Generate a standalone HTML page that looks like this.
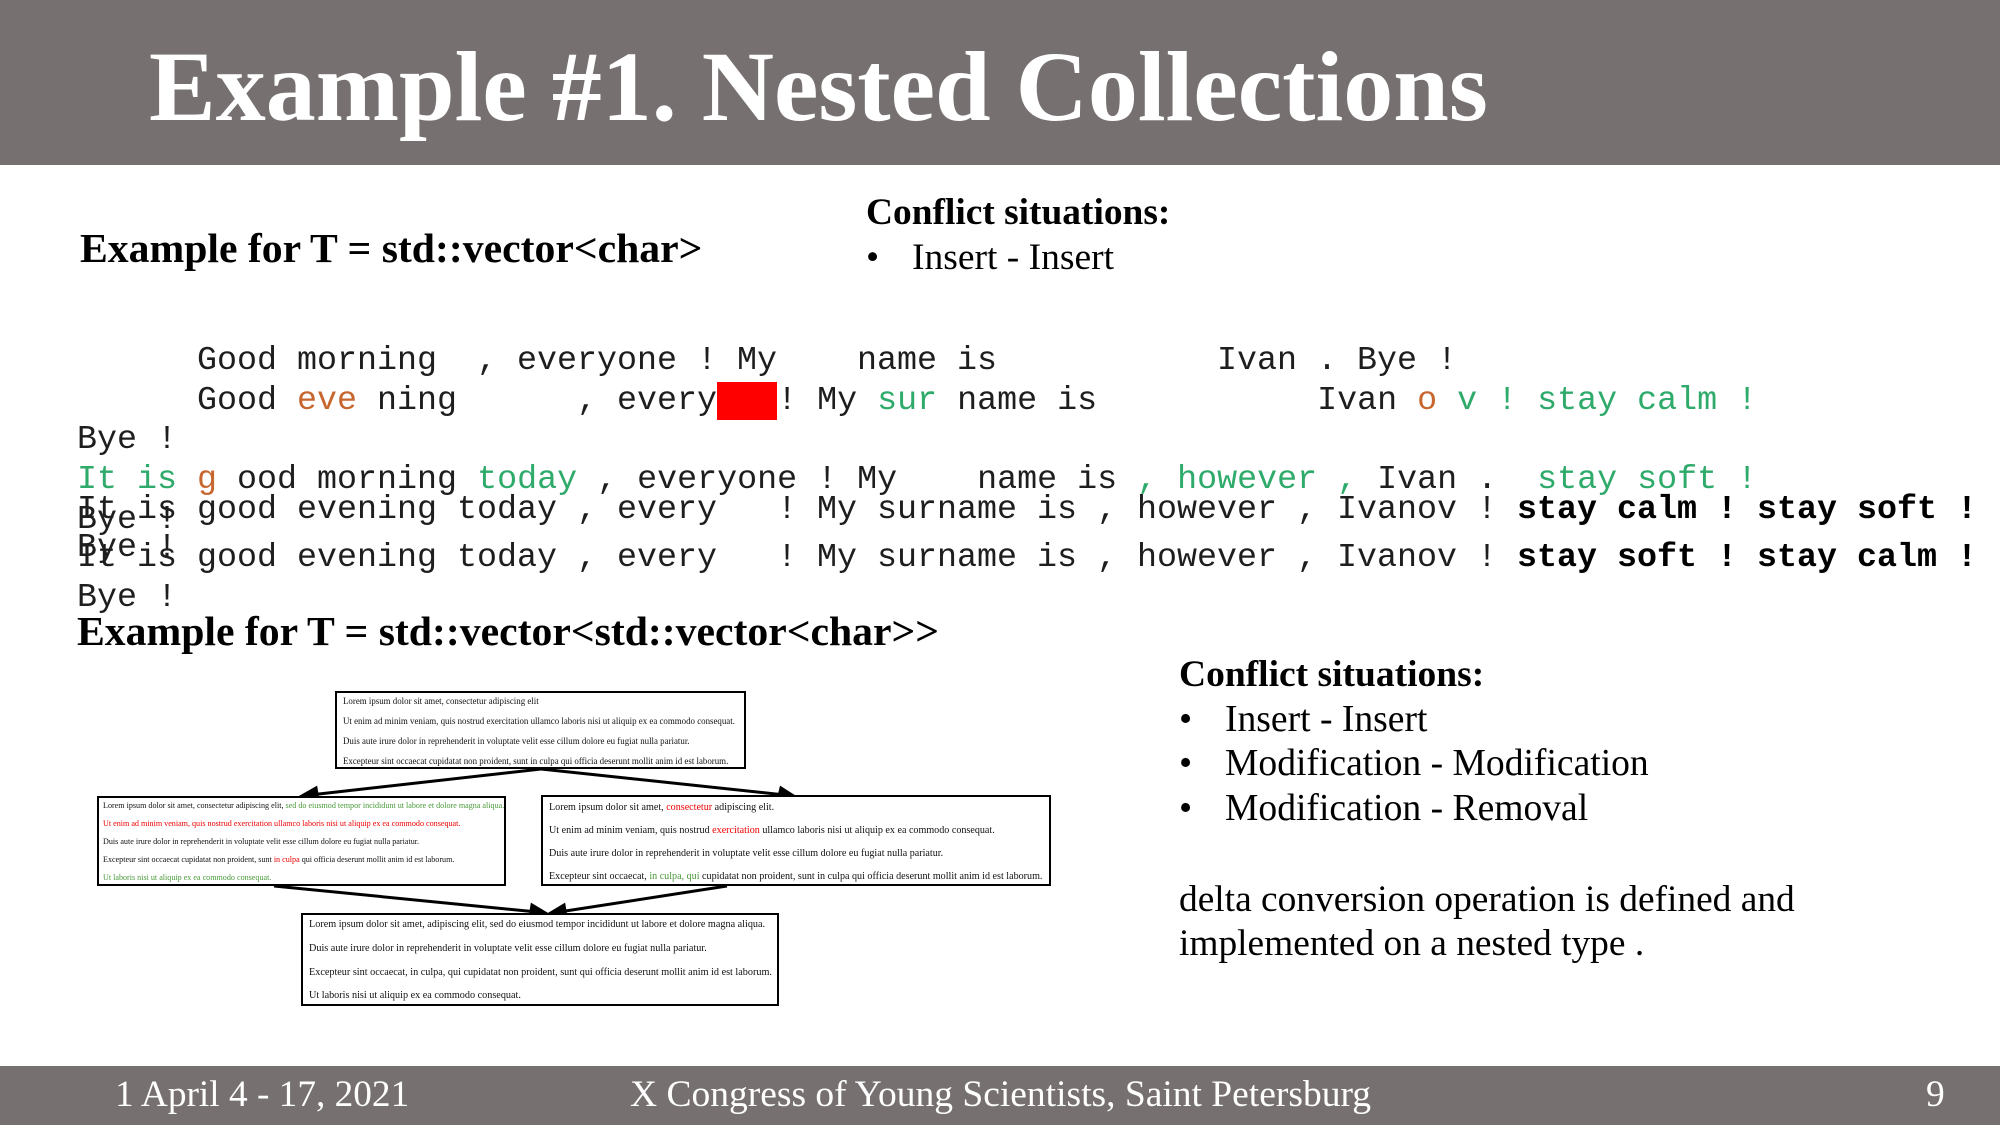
<!DOCTYPE html>
<html><head><meta charset="utf-8"><style>
*{margin:0;padding:0;box-sizing:border-box}
body{width:2000px;height:1125px;position:relative;background:#fff;overflow:hidden;font-family:"Liberation Serif",serif;color:#000}
.a{position:absolute;white-space:pre;line-height:1}
.hdr{position:absolute;left:0;top:0;width:2000px;height:165px;background:#767170}
.ftr{position:absolute;left:0;top:1066px;width:2000px;height:59px;background:#767170}
.m{position:absolute;left:77px;font-family:"Liberation Mono",monospace;font-size:33.33px;line-height:1;white-space:pre;color:#1e1e1e}
.g{color:#2eaa6a}.o{color:#c8662f}.b{font-weight:bold;color:#000}
.red{background:#f00}
.box{position:absolute;border:2px solid #000;background:#fff;font-family:"Liberation Serif",serif;color:#111}
.box div{position:absolute;white-space:nowrap;line-height:1}
.r{color:#e00}.gr{color:#4a9a3a}
</style></head><body>
<div class="hdr"></div>
<div class="a" style="left:149px;top:37px;font-size:100px;font-weight:bold;color:#fff">Example #1. Nested Collections</div>

<div class="a" style="left:80px;top:229px;font-size:41.7px;font-weight:bold">Example for T = std::vector&lt;char&gt;</div>
<div class="a" style="left:866px;top:194px;font-size:37.4px;font-weight:bold">Conflict situations:</div>
<div class="a" style="left:866px;top:239px;font-size:37.5px">•</div>
<div class="a" style="left:912px;top:239px;font-size:37.5px">Insert - Insert</div>

<div class="m" style="top:345px">      Good morning  , everyone ! My    name is           Ivan . Bye !</div>
<div class="m" style="top:385px">      Good <span class="o">eve</span> ning      , every<span class="red">   </span>! My <span class="g">sur</span> name is           Ivan <span class="o">o</span> <span class="g">v ! stay calm !</span></div>
<div class="m" style="top:424px">Bye !</div>
<div class="m" style="top:464px"><span class="g">It is</span> <span class="o">g</span> ood morning <span class="g">today</span> , everyone ! My    name is <span class="g">, however ,</span> Ivan .  <span class="g">stay soft !</span></div>
<div class="m" style="top:494px">It is good evening today , every   ! My surname is , however , Ivanov ! <span class="b">stay calm ! stay soft !</span></div>
<div class="m" style="top:504px">Bye !</div>
<div class="m" style="top:532px">Bye !</div>
<div class="m" style="top:542px">It is good evening today , every   ! My surname is , however , Ivanov ! <span class="b">stay soft ! stay calm !</span></div>
<div class="m" style="top:582px">Bye !</div>

<div class="a" style="left:77px;top:612px;font-size:41.7px;font-weight:bold">Example for T = std::vector&lt;std::vector&lt;char&gt;&gt;</div>

<div class="a" style="left:1179px;top:656px;font-size:37.5px;font-weight:bold">Conflict situations:</div>
<div class="a" style="left:1179px;top:701px;font-size:37.6px">•</div>
<div class="a" style="left:1225px;top:701px;font-size:37.6px">Insert - Insert</div>
<div class="a" style="left:1179px;top:745px;font-size:37.6px">•</div>
<div class="a" style="left:1225px;top:745px;font-size:37.6px">Modification - Modification</div>
<div class="a" style="left:1179px;top:790px;font-size:37.6px">•</div>
<div class="a" style="left:1225px;top:790px;font-size:37.6px">Modification - Removal</div>
<div class="a" style="left:1179px;top:881px;font-size:37.4px">delta conversion operation is defined and</div>
<div class="a" style="left:1179px;top:925px;font-size:37.4px">implemented on a nested type .</div>

<svg style="position:absolute;left:0;top:0" width="2000" height="1125">
<g stroke="#000" stroke-width="3" fill="#000">
<line x1="541" y1="769" x2="310" y2="795"/><polygon points="300,797 316,788 318,800"/>
<line x1="541" y1="769" x2="785" y2="795"/><polygon points="795,797 778,800 781,788"/>
<line x1="274" y1="886" x2="537" y2="912"/><polygon points="547,914 530,917 532,905"/>
<line x1="727" y1="886" x2="559" y2="912"/><polygon points="549,914 564,905 566,917"/>
</g></svg>

<div class="box" style="left:335px;top:691px;width:411px;height:78px;font-size:8.9px">
<div style="left:6px;top:4px">Lorem ipsum dolor sit amet, consectetur adipiscing elit</div>
<div style="left:6px;top:24px">Ut enim ad minim veniam, quis nostrud exercitation ullamco laboris nisi ut aliquip ex ea commodo consequat.</div>
<div style="left:6px;top:44px">Duis aute irure dolor in reprehenderit in voluptate velit esse cillum dolore eu fugiat nulla pariatur.</div>
<div style="left:6px;top:64px">Excepteur sint occaecat cupidatat non proident, sunt in culpa qui officia deserunt mollit anim id est laborum.</div>
</div>
<div class="box" style="left:97px;top:796px;width:409px;height:90px;font-size:8.1px">
<div style="left:4px;top:4px">Lorem ipsum dolor sit amet, consectetur adipiscing elit, <span class="gr">sed do eiusmod tempor incididunt ut labore et dolore magna aliqua.</span></div>
<div style="left:4px;top:22px" class="r">Ut enim ad minim veniam, quis nostrud exercitation ullamco laboris nisi ut aliquip ex ea commodo consequat.</div>
<div style="left:4px;top:40px">Duis aute irure dolor in reprehenderit in voluptate velit esse cillum dolore eu fugiat nulla pariatur.</div>
<div style="left:4px;top:58px">Excepteur sint occaecat cupidatat non proident, sunt <span class="r">in culpa</span> qui officia deserunt mollit anim id est laborum.</div>
<div style="left:4px;top:76px" class="gr">Ut laboris nisi ut aliquip ex ea commodo consequat.</div>
</div>
<div class="box" style="left:541px;top:795px;width:510px;height:91px;font-size:10.1px">
<div style="left:6px;top:6px">Lorem ipsum dolor sit amet, <span class="r">consectetur</span> adipiscing elit.</div>
<div style="left:6px;top:29px">Ut enim ad minim veniam, quis nostrud <span class="r">exercitation</span> ullamco laboris nisi ut aliquip ex ea commodo consequat.</div>
<div style="left:6px;top:52px">Duis aute irure dolor in reprehenderit in voluptate velit esse cillum dolore eu fugiat nulla pariatur.</div>
<div style="left:6px;top:75px">Excepteur sint occaecat, <span class="gr">in culpa, qui</span> cupidatat non proident, sunt in culpa qui officia deserunt mollit anim id est laborum.</div>
</div>
<div class="box" style="left:301px;top:913px;width:478px;height:93px;font-size:10.2px">
<div style="left:6px;top:5px">Lorem ipsum dolor sit amet, adipiscing elit, sed do eiusmod tempor incididunt ut labore et dolore magna aliqua.</div>
<div style="left:6px;top:29px">Duis aute irure dolor in reprehenderit in voluptate velit esse cillum dolore eu fugiat nulla pariatur.</div>
<div style="left:6px;top:53px">Excepteur sint occaecat, in culpa, qui cupidatat non proident, sunt qui officia deserunt mollit anim id est laborum.</div>
<div style="left:6px;top:76px">Ut laboris nisi ut aliquip ex ea commodo consequat.</div>
</div>

<div class="ftr"></div>
<div class="a" style="left:115px;top:1076px;font-size:37.3px;color:#fff">1 April 4 - 17, 2021</div>
<div class="a" style="left:630px;top:1076px;font-size:37.5px;color:#fff">X Congress of Young Scientists, Saint Petersburg</div>
<div class="a" style="left:1926px;top:1076px;font-size:37.5px;color:#fff">9</div>
</body></html>
